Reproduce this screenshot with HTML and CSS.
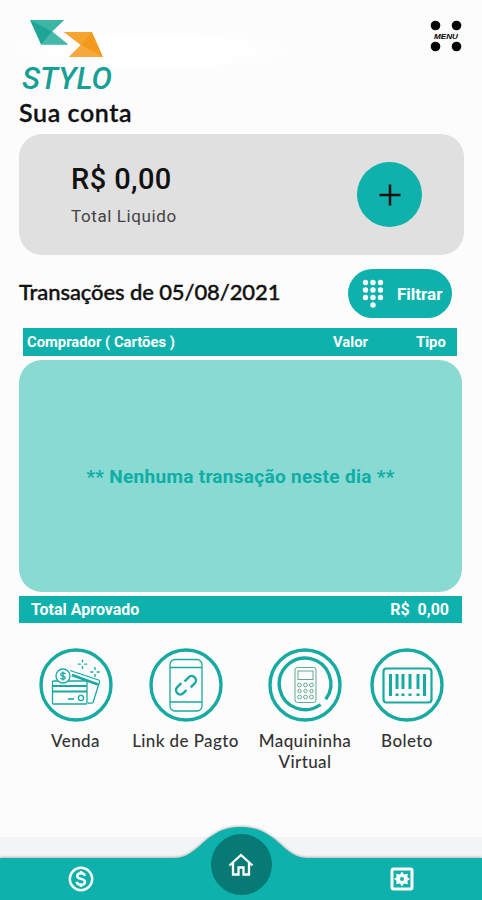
FILE: index.html
```html
<!DOCTYPE html>
<html lang="pt-BR">
<head>
    <meta charset="UTF-8">
    <meta name="viewport" content="width=device-width, initial-scale=1.0">
    <title>Stylo - Sua conta</title>
    <link rel="stylesheet" href="styles.css">
</head>
<body>
    <div class="app">
        <header class="header">
            <svg class="logo" width="104" height="80" viewBox="0 0 104 80">
                <polygon points="10,2 44,2 32,13.5 48,26.500 21,26.500" fill="#1fa598"/>
                <polygon points="10,2 44,2 32,13.500" fill="#3db5a5"/>
                <polygon points="21,26.500 32,13.500 48,26.500" fill="#43b9aa"/>
                <polygon points="44,14 72,14 83,39 49,39 61,27" fill="#f39a1c"/>
                <polygon points="44,14 72,14 61,27" fill="#f6a531"/>
                <polygon points="49,39 61,27 83,39" fill="#f7a83c"/>
                <text class="logo-text" x="2" y="71" textLength="90" lengthAdjust="spacingAndGlyphs">STYLO</text>
            </svg>
            <button class="menu">
                <svg width="32" height="32" viewBox="0 0 32 32">
                    <circle cx="5.500" cy="5.500" r="4.800"/>
                    <circle cx="26.500" cy="5.500" r="4.800"/>
                    <circle cx="5.500" cy="26.500" r="4.800"/>
                    <circle cx="26.500" cy="26.500" r="4.800"/>
                    <text class="menu-text" x="4" y="18.500" textLength="24" lengthAdjust="spacingAndGlyphs">MENU</text>
                </svg>
            </button>
        </header>

        <main class="content">
            <h1 class="title">Sua conta</h1>

            <section class="balance">
                <div>
                    <div class="balance-value">R$ 0,00</div>
                    <div class="balance-label">Total Liquido</div>
                </div>
                <button class="add">
                    <svg width="24" height="24" viewBox="0 0 24 24">
                        <path d="M12 1.500v21M1.500 12h21" stroke="#111" stroke-width="2.500"/>
                    </svg>
                </button>
            </section>

            <div class="filter-row">
                <h2 class="subtitle">Transações de 05/08/2021</h2>
                <button class="filter">
                    <svg width="22" height="30" viewBox="0 0 22 30" fill="#fff">
                        <circle cx="3.500" cy="3.500" r="2.700"/><circle cx="11" cy="3.500" r="2.700"/><circle cx="18.500" cy="3.500" r="2.700"/>
                        <circle cx="3.500" cy="11" r="2.700"/><circle cx="11" cy="11" r="2.700"/><circle cx="18.500" cy="11" r="2.700"/>
                        <circle cx="3.500" cy="18.500" r="2.700"/><circle cx="11" cy="18.500" r="2.700"/><circle cx="18.500" cy="18.500" r="2.700"/>
                        <circle cx="11" cy="26" r="2.700"/>
                    </svg>
                    <span>Filtrar</span>
                </button>
            </div>

            <div class="table-head">
                <span>Comprador ( Cartões )</span>
                <span>Valor</span>
                <span>Tipo</span>
            </div>
            <div class="empty">** Nenhuma transação neste dia **</div>
            <div class="total">
                <span>Total Aprovado</span>
                <span class="total-value">R$&nbsp; 0,00</span>
            </div>

            <div class="actions">
                <a class="action">
                    <svg class="action-icon" viewBox="0 0 74 74">
                        <circle class="ring" cx="37" cy="37" r="35"/>
                        <g class="thin">
                            <path d="M31 22.500l28.500 9.500c1 .4 1.400 1 1 2L54 54.500c-.4 1-1.400 1-5 .5"/>
                            <path d="M33 27l26 9.500" stroke-width="2.500"/>
                            <rect x="13.500" y="33" width="34.500" height="23" rx="1" fill="#fdfdfd"/>
                            <path d="M13.500 38h34.500M13.500 43.500h34.500" stroke-width="2.200"/>
                            <path d="M29 51h6" stroke-width="1.600"/>
                            <circle cx="42" cy="50" r="2.600"/>
                            <circle cx="24" cy="28" r="7" fill="#fdfdfd"/>
                            <path d="M26.500 26c-2.500-2-5.500-.5-4.500 1.200.9 1.200 4 .6 4.200 2.300.2 2-3.200 2.200-4.900.7M24 23.500v9"/>
                            <path d="M43.500 11.500v3M43.500 18v3M38.800 16.200h3M45.200 16.200h3M56 19v3M56 26v3M51.300 24h3M57.700 24h3"/>
                        </g>
                    </svg>
                    <span>Venda</span>
                </a>
                <a class="action">
                    <svg class="action-icon" viewBox="0 0 74 74">
                        <circle class="ring" cx="37" cy="37" r="35"/>
                        <rect class="thin" x="21" y="11.500" width="32" height="51.500" rx="5"/>
                        <path class="thin" d="M21 19.500h32M21 54h32"/>
                        <path class="link" d="M35.500 33.500l4.200-4.200a4.200 4.200 0 0 1 6 6l-4 4M37.500 42l-3.200 3.200a4.200 4.200 0 0 1-6-6l4-4"/>
                    </svg>
                    <span>Link de Pagto</span>
                </a>
                <a class="action">
                    <svg class="action-icon" viewBox="0 0 74 74">
                        <circle class="ring" cx="37" cy="37" r="35"/>
                        <path class="ring" d="M52.500 57.500a25.800 25.800 0 1 1 5.200-5.200" transform="translate(0 -1)"/>
                        <g class="pos">
                            <rect x="27" y="19.500" width="21" height="35" rx="2.500"/>
                            <rect x="30" y="23" width="15" height="8.500"/>
                            <circle cx="31.500" cy="37" r="1.900"/><circle cx="37.500" cy="37" r="1.900"/><circle cx="43.500" cy="37" r="1.900"/>
                            <circle cx="31.500" cy="43" r="1.700"/><circle cx="37.500" cy="43" r="1.700"/><circle cx="43.500" cy="43" r="1.700"/>
                            <circle cx="31.500" cy="49" r="1.900"/><circle cx="37.500" cy="49" r="1.900"/><circle cx="43.500" cy="49" r="1.900"/>
                        </g>
                    </svg>
                    <span>Maquininha<br>Virtual</span>
                </a>
                <a class="action">
                    <svg class="action-icon" viewBox="0 0 74 74">
                        <circle class="ring" cx="37" cy="37" r="35"/>
                        <rect class="barcode" x="13.500" y="20.500" width="48" height="34" rx="3"/>
                        <path class="bars" d="M20.500 26v22M27 26v15M33 26v15M40 26v15M48 26v15M54.500 26v22"/>
                        <path class="bars" d="M27 45.500v2.500M33 45.500v2.500M40 45.500v2.500M48 45.500v2.500"/>
                    </svg>
                    <span>Boleto</span>
                </a>
            </div>
        </main>

        <nav class="navbar">
            <svg class="navbar-shape" width="482" height="75" viewBox="0 0 482 75">
                <path d="M0 33H174C200 33 204 2 241 2S282 33 308 33H482V75H0Z" fill="#0eb1ab"/>
            </svg>
            <a class="nav-item">
                <svg width="26" height="26" viewBox="0 0 26 26" fill="none" stroke="#fff" stroke-width="2.400">
                    <circle cx="13" cy="13" r="11.200"/>
                    <path d="M17 9.800c-.6-1.900-2-2.600-4-2.600-2.200 0-3.800 1-3.800 2.800 0 4 7.800 1.800 7.800 6 0 1.800-1.700 2.800-4 2.800-2.400 0-4-1-4.300-3M13 5v2.500M13 18.500V21"/>
                </svg>
            </a>
            <a class="nav-home">
                <svg width="26" height="24" viewBox="0 0 26 24" fill="none" stroke="#fff" stroke-width="2.300">
                    <path d="M1.500 12.500L13 2l11.500 10.500M5 10v11.500h5.500v-7h5v7H21V10"/>
                </svg>
            </a>
            <a class="nav-item">
                <svg width="24" height="24" viewBox="0 0 24 24">
                    <rect x="2" y="2" width="20" height="20" rx="1.500" fill="none" stroke="#fff" stroke-width="3"/>
                    <path d="M12 4.500l2 3 3.800-.8-.4 3.500 2.600 1.800-2.600 1.800.4 3.500-3.800-.8-2 3-2-3-3.800.8.400-3.500L4 12l2.600-1.800-.4-3.500 3.800.8z" fill="#fff"/>
                    <circle cx="12" cy="12" r="2" fill="#0eb1ab"/>
                </svg>
            </a>
        </nav>
    </div>
</body>
</html>
```
FILE: styles.css
```css
* {
    margin: 0;
    padding: 0;
    box-sizing: border-box;
}

body {
    background: #fcfcfc;
    font-family: Roboto, sans-serif;
    overflow: hidden;
}

button {
    border: none;
    background: none;
    font-family: inherit;
}

.app {
    width: 482px;
    height: 900px;
    display: flex;
    flex-direction: column;
    background: #fcfcfc;
}

/* Cabeçalho */
.header {
    height: 97px;
    padding: 18px 20px 0;
    display: flex;
    justify-content: space-between;
    align-items: flex-start;
    background: radial-gradient(ellipse at 150px 50px, #ffffff 80px, #fcfcfc 150px);
}

.logo-text {
    font-family: Roboto, sans-serif;
    font-size: 31px;
    font-style: italic;
    font-weight: 500;
    fill: #16a095;
}

.menu {
    width: 32px;
    height: 32px;
    margin-top: 2px;
}

.menu-text {
    font-family: "Liberation Sans", sans-serif;
    font-size: 8px;
    font-style: italic;
    font-weight: bold;
}

.content {
    flex: 1;
    padding: 0 19px;
}

.title {
    height: 37px;
    font: 600 25px/30px Lato, sans-serif;
    letter-spacing: 0.6px;
    color: #111;
    -webkit-text-stroke: 0.3px #111;
}

/* Saldo */
.balance {
    width: 445px;
    height: 121px;
    padding: 0 42px 0 52px;
    display: flex;
    justify-content: space-between;
    align-items: center;
    background: #e0e0e0;
    border-radius: 23px;
}

.balance-value {
    font-size: 29px;
    line-height: 34px;
    font-weight: 500;
    letter-spacing: 0.4px;
    color: #111;
}

.balance-label {
    margin-top: 8px;
    font-size: 17px;
    line-height: 24px;
    letter-spacing: 0.6px;
    color: #444;
}

.add {
    width: 65px;
    height: 65px;
    display: flex;
    justify-content: center;
    align-items: center;
    background: #0eb1ab;
    border-radius: 50%;
}

.filter-row {
    height: 73px;
    padding: 14px 11px 0 0;
    display: flex;
    justify-content: space-between;
}

.subtitle {
    font: 500 22px/46px Lato, sans-serif;
    letter-spacing: -0.1px;
    color: #111;
    -webkit-text-stroke: 0.4px #111;
    white-space: nowrap;
}

.filter {
    width: 104px;
    height: 49px;
    padding-left: 14px;
    display: flex;
    align-items: center;
    gap: 13px;
    background: #0eb1ab;
    border-radius: 25px;
    color: #fff;
    font-size: 17px;
    font-weight: 700;
}

/* Tabela de transações */
.table-head {
    width: 434px;
    height: 28px;
    margin-left: 4px;
    padding-left: 4px;
    display: grid;
    grid-template-columns: 306px 83px auto;
    background: #0eb1ab;
    color: #fff;
    font-size: 14.800px;
    line-height: 28px;
    font-weight: 700;
}

.empty {
    width: 443px;
    height: 232px;
    margin: 4px 0;
    display: flex;
    justify-content: center;
    align-items: center;
    background: #88dad3;
    border-radius: 23px;
    color: #0eada6;
    font-size: 19px;
    font-weight: 700;
    letter-spacing: 0.3px;
}

.total {
    width: 443px;
    height: 27px;
    padding: 0 13px 0 12px;
    display: flex;
    justify-content: space-between;
    background: #0eb1ab;
    color: #fff;
    font-size: 16px;
    line-height: 27px;
    font-weight: 700;
}

/* Atalhos */
.actions {
    margin-top: 25px;
    display: grid;
    grid-template-columns: 113px 107px 132px 72px;
}

.action {
    display: flex;
    flex-direction: column;
    align-items: center;
    text-align: center;
    white-space: nowrap;
    font: 500 17px/21px Lato, sans-serif;
    letter-spacing: 0.4px;
    color: #333;
}

.action-icon {
    width: 74px;
    height: 74px;
    margin-bottom: 8px;
    fill: none;
    stroke: #17aaa3;
}

.ring {
    stroke-width: 3.4;
}

.thin {
    stroke-width: 1.3;
}

.link {
    stroke-width: 2.4;
}

.pos {
    stroke: #62a994;
    stroke-width: 1;
}

.barcode {
    stroke-width: 2.2;
}

.bars {
    stroke-width: 3;
}

/* Barra inferior */
.navbar {
    position: relative;
    height: 63px;
    padding-top: 21px;
    display: grid;
    grid-template-columns: 161px 160px 161px;
    justify-items: center;
    background: #f3f4f6;
}

.navbar-shape {
    position: absolute;
    left: 0;
    bottom: 0;
    filter: drop-shadow(0 -1px 1px rgba(0, 0, 0, 0.25));
}

.nav-item {
    position: relative;
    height: 42px;
    display: flex;
    align-items: center;
}

.nav-home {
    position: relative;
    width: 61px;
    height: 61px;
    margin-top: -24px;
    display: flex;
    justify-content: center;
    align-items: center;
    background: #087a75;
    border-radius: 50%;
}
```
